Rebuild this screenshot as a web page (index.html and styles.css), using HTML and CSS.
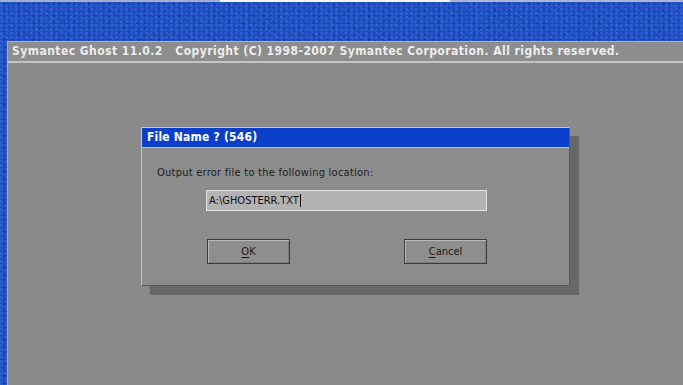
FILE: index.html
```html
<!DOCTYPE html>
<html>
<head>
<meta charset="utf-8">
<link rel="stylesheet" href="styles.css">
</head>
<body>
<div class="topline"><span class="tl a"></span><span class="tl b"></span><span class="tl c"></span></div>
<div class="panel">
  <div class="header">Symantec Ghost 11.0.2&nbsp;&nbsp;&nbsp;Copyright (C) 1998-2007 Symantec Corporation. All rights reserved.</div>
  <div class="workspace">
    <div class="dialog">
      <div class="titlebar">File Name ? (546)</div>
      <div class="dbody">
        <div class="prompt">Output error file to the following location:</div>
        <div class="input"><span>A:\GHOSTERR.TXT</span><span class="caret"></span></div>
        <div class="buttons">
          <div class="btn"><u>O</u>K</div>
          <div class="btn"><u>C</u>ancel</div>
        </div>
      </div>
    </div>
  </div>
</div>
</body>
</html>
```
FILE: styles.css
```css
html, body {
  margin: 0;
  padding: 0;
  width: 683px;
  height: 385px;
  overflow: hidden;
}
body {
  background-color: #1b4ec4;
  background-image:
    radial-gradient(circle at 30% 40%, rgba(140,170,255,0.18) 0 1px, transparent 2px),
    radial-gradient(circle at 70% 70%, rgba(0,20,90,0.20) 0 1px, transparent 2px),
    repeating-linear-gradient(35deg, rgba(255,255,255,0.05) 0 1px, transparent 1px 6px),
    repeating-linear-gradient(-50deg, rgba(0,0,40,0.08) 0 1px, transparent 1px 7px);
  background-size: 5px 4px, 7px 6px, auto, auto;
  font-family: "DejaVu Sans Condensed", "DejaVu Sans", sans-serif;
  display: flex;
  flex-direction: column;
}
.topline {
  display: flex;
  height: 2px;
}
.tl { display: block; height: 2px; }
.tl.a { width: 220px; background: #9fb0cf; }
.tl.b { width: 230px; background: #f2f4f8; }
.tl.c { flex: 1; background: #a9b6d2; }

.panel {
  margin-top: 39px;
  margin-left: 7px;
  flex: 1;
  display: flex;
  flex-direction: column;
  background: #8a8a8a;
  border-left: 1px solid #a8a8b8;
}
.header {
  height: 19px;
  line-height: 19px;
  border-top: 1px solid #b4b4b4;
  border-bottom: 2px solid #c4c4c4;
  background: #8d8d8d;
  color: #ececec;
  font-weight: bold;
  font-size: 12px;
  letter-spacing: 0.45px;
  padding-left: 4px;
  white-space: nowrap;
}
.workspace {
  flex: 1;
  display: flex;
  align-items: flex-start;
  padding-left: 133px;
  padding-top: 64px;
}
.dialog {
  width: 427px;
  height: 157px;
  border: 1px solid #c8c8c8;
  border-right-color: #5a5a5a;
  border-bottom-color: #5a5a5a;
  background: #8c8c8c;
  box-shadow: 9px 9px 0 #676767;
  display: flex;
  flex-direction: column;
}
.titlebar {
  height: 19px;
  line-height: 19px;
  background: #0b3fc9;
  color: #ffffff;
  font-weight: bold;
  font-size: 12px;
  letter-spacing: 0.2px;
  padding-left: 5px;
  border-bottom: 1px solid #c0c6d8;
  white-space: nowrap;
}
.dbody {
  flex: 1;
  display: flex;
  flex-direction: column;
  padding-left: 15px;
}
.prompt {
  margin-top: 18px;
  font-size: 11px;
  letter-spacing: 0.25px;
  color: #1c1c1c;
  height: 14px;
  line-height: 14px;
  white-space: nowrap;
}
.input {
  margin-top: 10px;
  margin-left: 49px;
  width: 277px;
  height: 19px;
  border: 1px solid #e4e4e4;
  background: #b3b3b3;
  display: flex;
  align-items: center;
  padding-left: 2px;
  box-sizing: content-box;
  font-size: 11px;
  color: #111;
}
.caret {
  display: inline-block;
  width: 1px;
  height: 13px;
  background: #111;
  margin-left: 1px;
}
.buttons {
  margin-top: 28px;
  margin-left: 50px;
  width: 280px;
  display: flex;
  justify-content: space-between;
}
.btn {
  width: 81px;
  height: 23px;
  border: 1px solid #3c3c3c;
  box-shadow: inset 1px 1px 0 #b8b8b8, inset -1px -1px 0 #7a7a7a;
  background: #8e8e8e;
  display: flex;
  align-items: center;
  justify-content: center;
  font-size: 11px;
  color: #1a1a1a;
}
.btn u {
  text-decoration: underline;
  text-underline-offset: 2px;
}
```
